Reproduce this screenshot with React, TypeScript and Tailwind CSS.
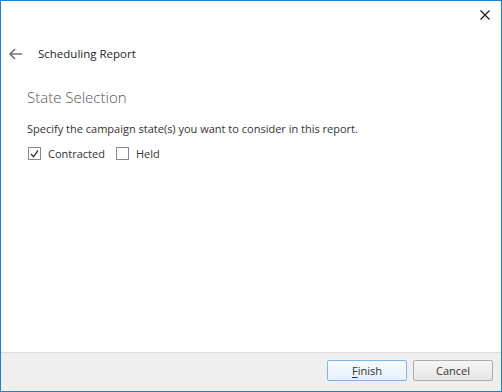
import React from "react";

export default function App() {
  const font = { fontFamily: '"Open Sans", "Noto Sans", sans-serif' };
  return (
    <div
      className="w-[502px] h-[392px] border border-[#1a83d4] bg-white flex flex-col text-[#1e1e1e]"
      style={font}
    >
      <div className="h-[29px] flex justify-end items-start pt-[9px] pr-[11px]">
        <svg width="10" height="10" viewBox="0 0 10 10">
          <path d="M0.5 0.5 L9.5 9.5 M9.5 0.5 L0.5 9.5" stroke="#111" strokeWidth="1.1" fill="none" />
        </svg>
      </div>
      <div className="flex items-center h-[20px] mt-[14px] pl-[8px]">
        <svg width="14" height="12" viewBox="0 0 14 12">
          <path d="M1 6 H13 M6 1 L1 6 L6 11" stroke="#777" strokeWidth="1.6" fill="none" />
        </svg>
        <span className="ml-[15px] text-[11.5px]">Scheduling Report</span>
      </div>
      <div className="pl-[26px] mt-[23px] text-[15px] font-light text-[#555] leading-[20px]">State Selection</div>
      <div className="pl-[26px] mt-[14px] text-[11px] text-[#333] leading-[15px]">
        Specify the campaign state(s) you want to consider in this report.
      </div>
      <div className="pl-[27px] mt-[10px] flex items-center text-[11px] text-[#333] leading-[15px]">
        <div className="w-[13px] h-[13px] border border-[#8a8a8a] bg-white flex items-center justify-center">
          <svg width="9" height="8" viewBox="0 0 9 8">
            <path d="M1 4 L3.5 6.8 L8 0.5" stroke="#333" strokeWidth="1.3" fill="none" />
          </svg>
        </div>
        <span className="ml-[7px]">Contracted</span>
        <div className="ml-[11px] w-[13px] h-[13px] border border-[#8a8a8a] bg-white" />
        <span className="ml-[7px]">Held</span>
      </div>
      <div className="flex-1" />
      <div className="h-[39px] border-t border-[#dadada] bg-[#efefef] flex items-start justify-end pt-[7px] pr-[8px] gap-[6px]">
        <button className="w-[80px] h-[21px] border border-[#7eb4ea] rounded-[2px] bg-gradient-to-b from-[#f7fbff] to-[#e5f1fb] text-[11px] text-[#333] leading-none">
          <span className="underline underline-offset-2">F</span>inish
        </button>
        <button className="w-[80px] h-[21px] border border-[#adadad] rounded-[2px] bg-gradient-to-b from-[#f6f6f6] to-[#e6e6e6] text-[11px] text-[#333] leading-none">
          Cancel
        </button>
      </div>
    </div>
  );
}
